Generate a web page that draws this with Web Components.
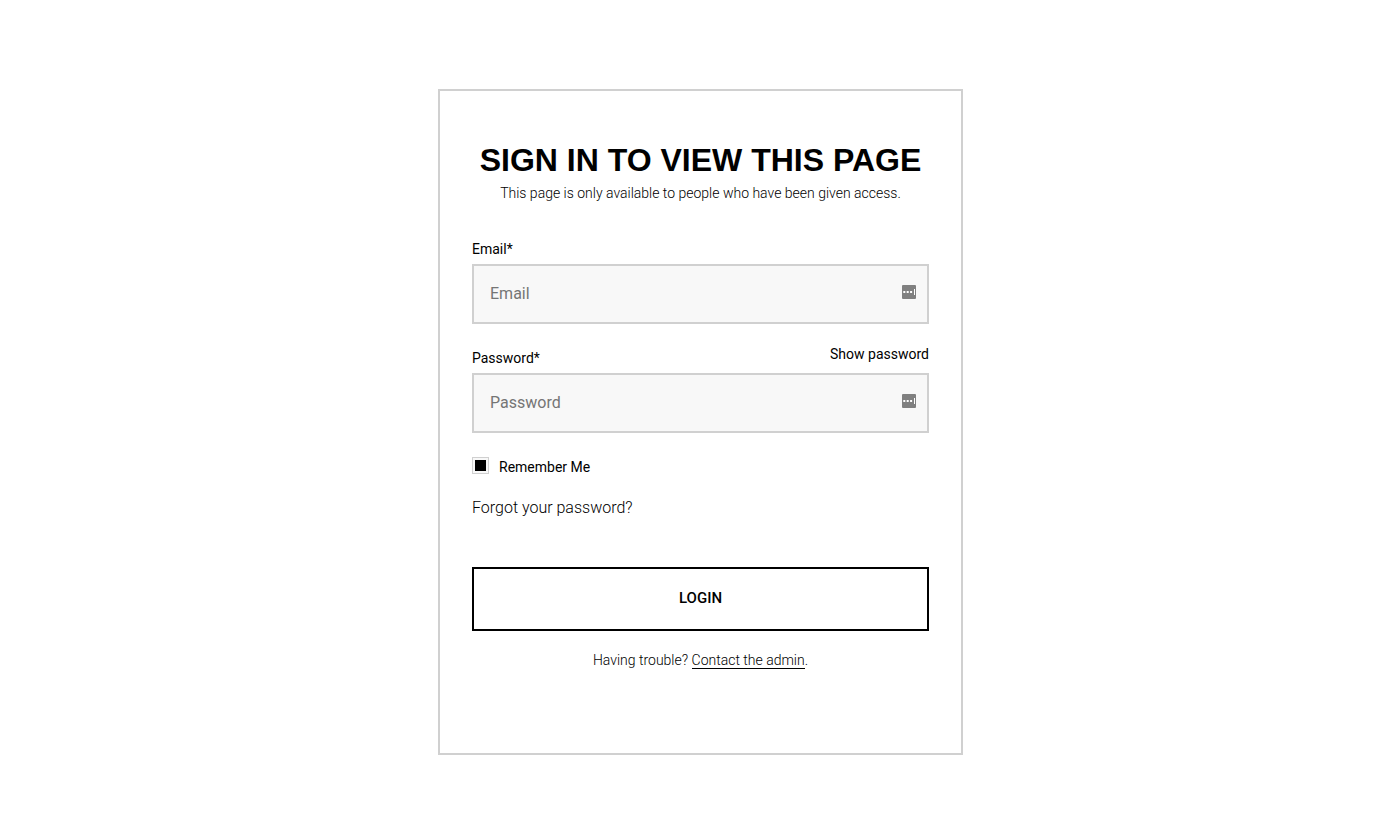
<!DOCTYPE html>
<html lang="en">
<head>
<meta charset="utf-8">
<meta name="viewport" content="width=device-width, initial-scale=1">
<title>Sign in</title>
<style>
	body {
		margin: 0;
		background: #fff;
		color: #000;
		font-family: Roboto, "Liberation Sans", sans-serif;
	}
</style>
</head>
<body>
<sign-in-page>
	<sign-in-card>
		<span slot="title">Sign in to view this page</span>
		<span slot="description">This page is only available to people who have been given access.</span>
		<text-field type="email" name="email" label="Email"></text-field>
		<text-field type="password" name="password" label="Password" revealable></text-field>
		<check-box name="remember">Remember Me</check-box>
		<forgot-link href="#forgot">Forgot your password?</forgot-link>
		<outline-button>Login</outline-button>
		<help-note slot="footer" href="#contact" link="Contact the admin">Having trouble?</help-note>
	</sign-in-card>
</sign-in-page>

<script>
function makeTemplate(html) {
	const t = document.createElement("template");
	t.innerHTML = html;
	return t;
}

class BaseElement extends HTMLElement {
	constructor() {
		super();
		this.attachShadow({mode: "open"});
		this.shadowRoot.appendChild(this.constructor.template.content.cloneNode(true));
	}
	$(selector) {
		return this.shadowRoot.querySelector(selector);
	}
}

class SignInPage extends BaseElement {
	static template = makeTemplate(`
		<style>
			:host {
				display: flex;
				justify-content: center;
				padding: 89px 0 32px 4px;
			}
			main {
				width: 100%;
				max-width: 525px;
			}
		</style>
		<main><slot></slot></main>
	`);
}

class SignInCard extends BaseElement {
	static template = makeTemplate(`
		<style>
			:host {
				display: block;
				box-sizing: border-box;
				border: 2px solid #d0d0d0;
				padding: 48px 32px 80px;
			}
			header {
				text-align: center;
				margin-bottom: 34px;
			}
			h1 {
				margin: 0;
				font: 700 32px/42px "Liberation Sans", Arial, sans-serif;
				text-transform: uppercase;
			}
			p {
				margin: 0;
				font-size: 14px;
				font-weight: 300;
				line-height: 24px;
			}
		</style>
		<header>
			<h1><slot name="title"></slot></h1>
			<p><slot name="description"></slot></p>
		</header>
		<form><slot></slot></form>
		<slot name="footer"></slot>
	`);
}

class TextField extends BaseElement {
	static template = makeTemplate(`
		<style>
			:host {
				display: block;
				margin-bottom: 24px;
			}
			.top {
				display: flex;
				justify-content: space-between;
				align-items: flex-start;
				height: 25px;
				font-size: 14px;
				line-height: 20px;
			}
			button {
				margin: -4px 0 0;
				padding: 0;
				border: 0;
				background: none;
				color: inherit;
				font: inherit;
				cursor: pointer;
			}
			button[hidden] {
				display: none;
			}
			.box {
				position: relative;
			}
			input {
				display: block;
				box-sizing: border-box;
				width: 100%;
				height: 60px;
				margin: 0;
				padding: 0 40px 2px 16px;
				border: 2px solid #d0d0d0;
				border-radius: 0;
				background: #f8f8f8;
				color: #000;
				font: 400 16px/24px Roboto, "Liberation Sans", sans-serif;
			}
			input::placeholder {
				color: #757575;
			}
			svg {
				position: absolute;
				top: 21px;
				right: 13px;
			}
		</style>
		<div class="top">
			<label for="input"></label>
			<button type="button" hidden>Show password</button>
		</div>
		<div class="box">
			<input id="input">
			<svg width="14" height="14" viewBox="0 0 14 14" aria-hidden="true">
				<rect width="14" height="14" rx="1" fill="#808080"/>
				<path d="M1.300 6h2v2h-2zM4.700 6h2v2h-2zM8.100 6h2v2h-2zM12 4h1v6h-1z" fill="#fff"/>
			</svg>
		</div>
	`);

	connectedCallback() {
		const input = this.$("input");
		const toggle = this.$("button");
		const label = this.getAttribute("label");

		this.$("label").textContent = `${label}*`;
		input.type = this.getAttribute("type");
		input.name = this.getAttribute("name");
		input.placeholder = label;
		input.required = true;

		toggle.hidden = !this.hasAttribute("revealable");
		toggle.addEventListener("click", () => {
			const show = input.type == "password";
			input.type = show ? "text" : "password";
			toggle.textContent = show ? "Hide password" : "Show password";
		});
	}
}

class CheckBox extends BaseElement {
	static template = makeTemplate(`
		<style>
			:host {
				display: block;
				margin-bottom: 20px;
			}
			label {
				display: flex;
				align-items: flex-start;
				gap: 10px;
				font-size: 14px;
				line-height: 20px;
				cursor: pointer;
			}
			input {
				appearance: none;
				box-sizing: border-box;
				width: 17px;
				height: 17px;
				margin: 0;
				padding: 2px;
				border: 1px solid #d0d0d0;
				background: #f8f8f8;
			}
			input:checked {
				background: #000 content-box;
				box-shadow: inset 0 0 0 2px #f8f8f8;
			}
		</style>
		<label><input type="checkbox" checked><slot></slot></label>
	`);

	connectedCallback() {
		this.$("input").name = this.getAttribute("name");
	}
}

class ForgotLink extends BaseElement {
	static template = makeTemplate(`
		<style>
			:host {
				display: block;
				font-size: 16px;
				font-weight: 300;
				line-height: 22px;
				margin-bottom: 48px;
			}
			a {
				color: inherit;
				text-decoration: none;
			}
		</style>
		<a><slot></slot></a>
	`);

	connectedCallback() {
		this.$("a").href = this.getAttribute("href");
	}
}

class OutlineButton extends BaseElement {
	static template = makeTemplate(`
		<style>
			:host {
				display: block;
			}
			button {
				display: block;
				width: 100%;
				height: 64px;
				padding: 0 16px 2px;
				border: 2px solid #000;
				background: #fff;
				color: #000;
				font: 500 15px/20px Roboto, "Liberation Sans", sans-serif;
				text-transform: uppercase;
				cursor: pointer;
			}
		</style>
		<button type="submit"><slot></slot></button>
	`);
}

class HelpNote extends BaseElement {
	static template = makeTemplate(`
		<style>
			:host {
				display: block;
				margin-top: 16px;
				text-align: center;
				font-size: 14px;
				font-weight: 300;
				line-height: 26px;
			}
			a {
				border-bottom: 1px solid #000;
				color: inherit;
				text-decoration: none;
			}
		</style>
		<slot></slot> <a></a>.
	`);

	connectedCallback() {
		const a = this.$("a");
		a.href = this.getAttribute("href");
		a.textContent = this.getAttribute("link");
	}
}

window.customElements.define("sign-in-page", SignInPage);
window.customElements.define("sign-in-card", SignInCard);
window.customElements.define("text-field", TextField);
window.customElements.define("check-box", CheckBox);
window.customElements.define("forgot-link", ForgotLink);
window.customElements.define("outline-button", OutlineButton);
window.customElements.define("help-note", HelpNote);
</script>
</body>
</html>
